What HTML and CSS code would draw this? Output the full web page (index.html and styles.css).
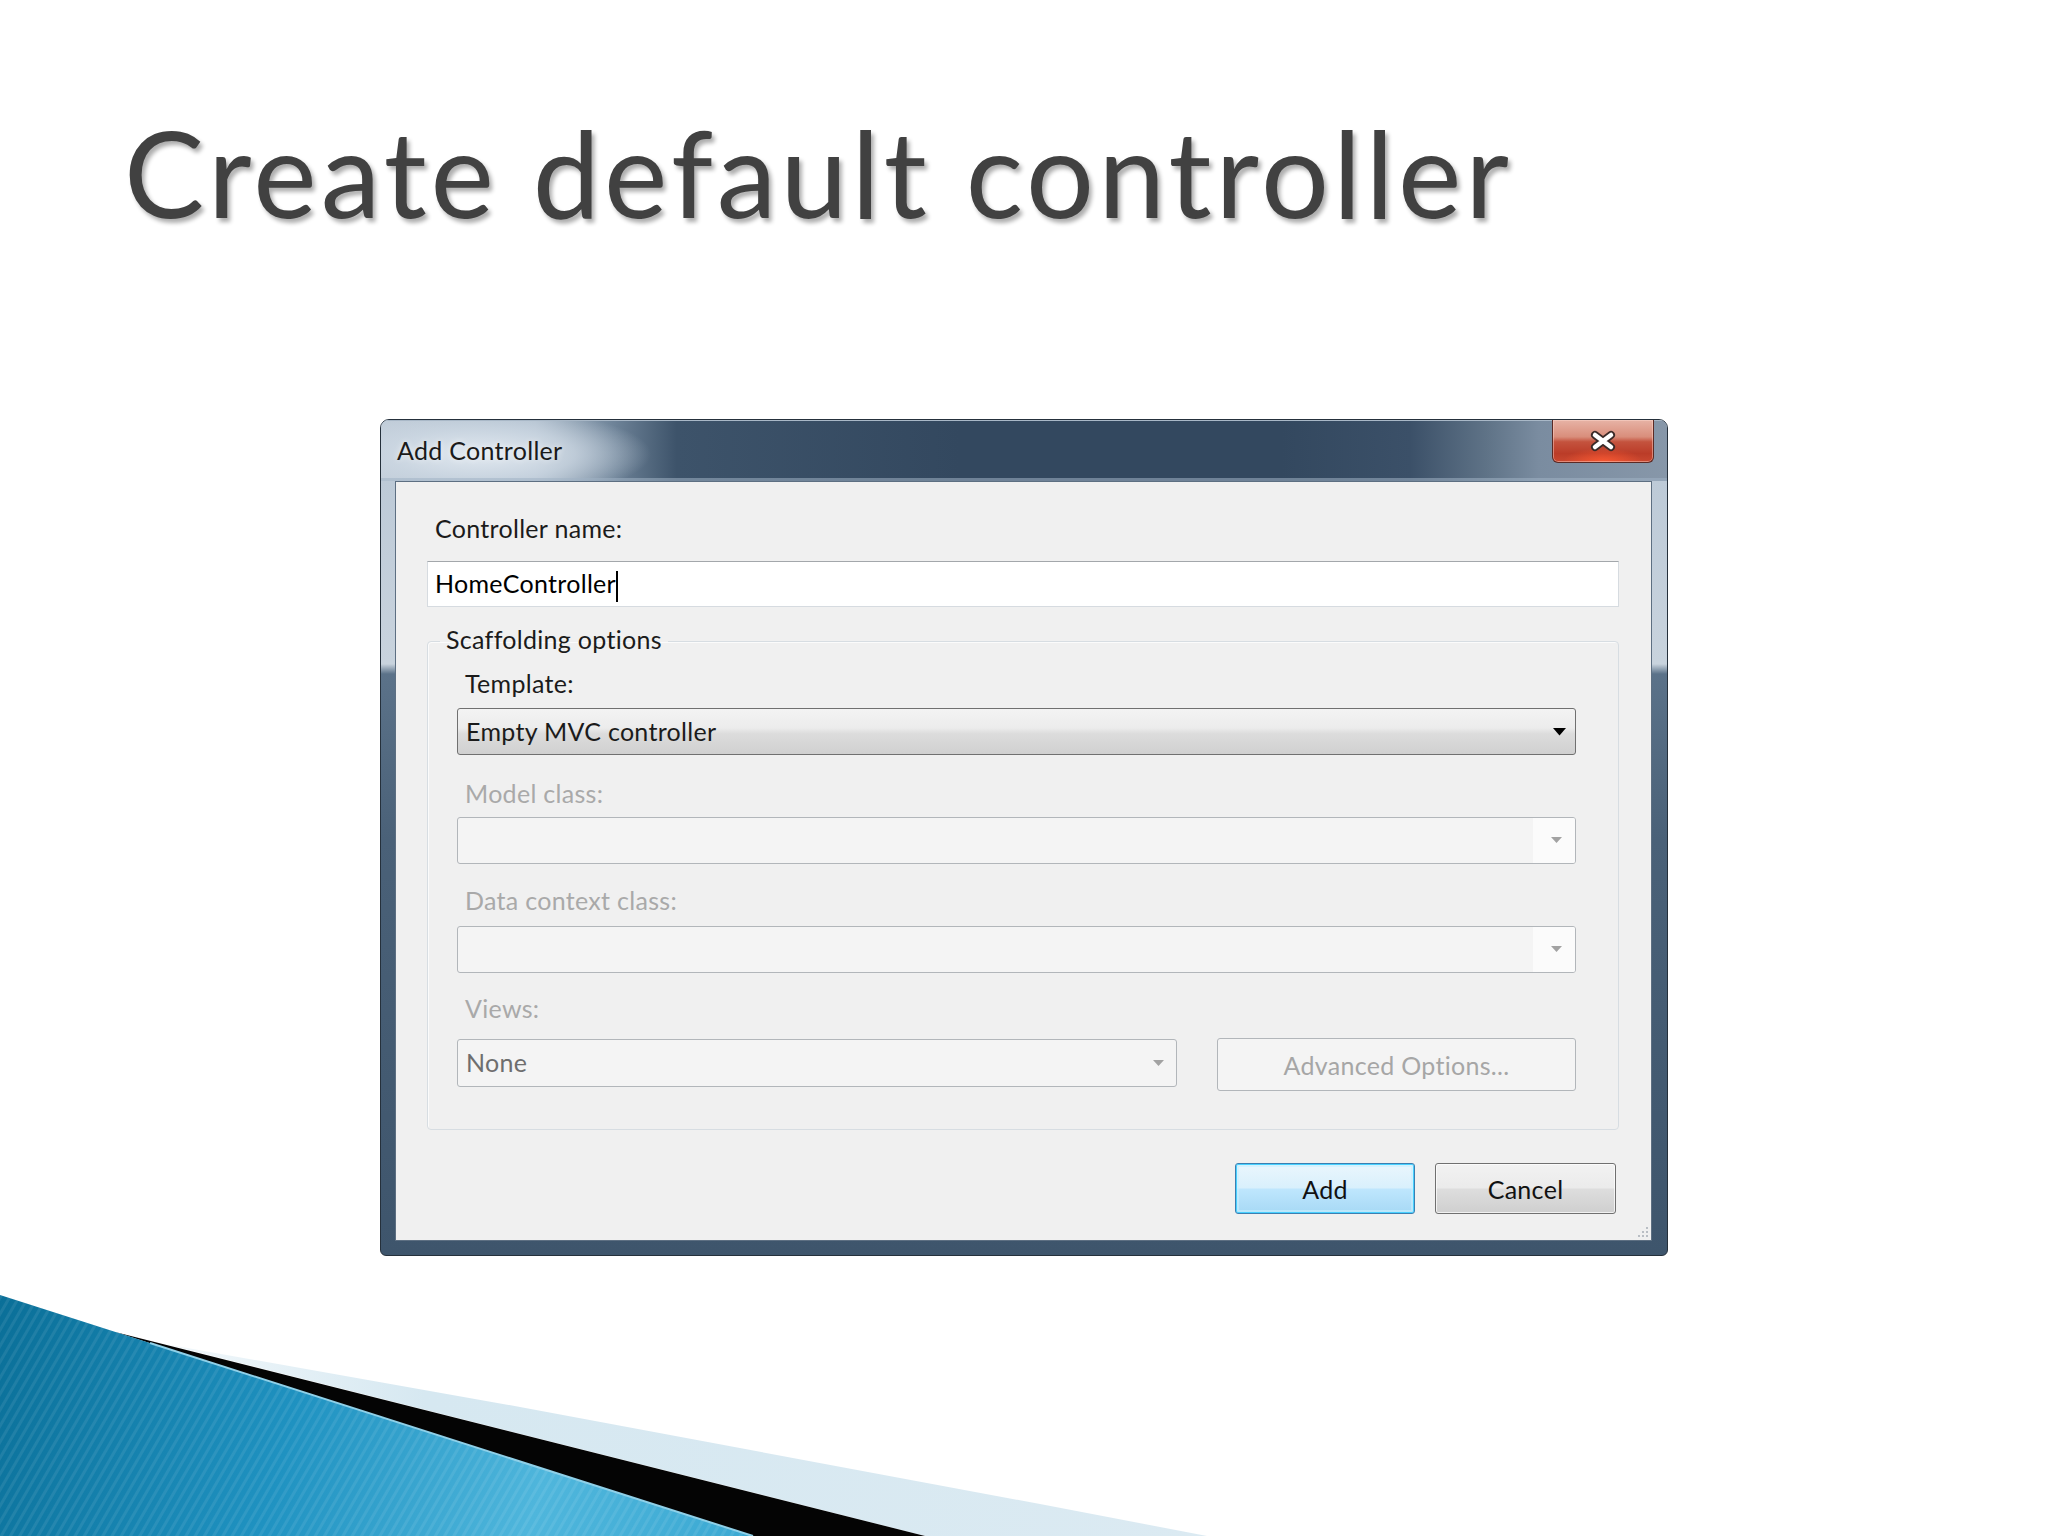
FILE: index.html
```html
<!DOCTYPE html>
<html lang="en">
<head>
<meta charset="utf-8">
<title>Create default controller</title>
<link rel="stylesheet" href="styles.css">
</head>
<body>
<div class="slide">
  <h1 class="slide-title">Create default controller</h1>

  <div class="dialog">
    <div class="titlebar">
      <span class="titlebar-text">Add Controller</span>
      <div class="close-btn">
        <svg class="close-x" width="30" height="22" viewBox="0 0 30 22">
          <path d="M7 5 L23 17 M23 5 L7 17" stroke="#3b2a28" stroke-width="8" stroke-linecap="round"/>
          <path d="M7 5 L23 17 M23 5 L7 17" stroke="#ffffff" stroke-width="4.5" stroke-linecap="round"/>
        </svg>
      </div>
    </div>
    <div class="frame-body">
      <div class="client">
        <div class="label">Controller name:</div>
        <div class="textbox"><span>HomeController</span><span class="caret"></span></div>

        <fieldset class="group">
          <legend>Scaffolding options</legend>
          <div class="group-body">
            <div class="label">Template:</div>
            <div class="combo combo-active gap-combo-template">
              <span class="combo-text">Empty MVC controller</span>
              <span class="combo-btn"><svg width="13" height="8" viewBox="0 0 13 8"><path d="M0 0 H13 L6.5 7.5 Z" fill="#000"/></svg></span>
            </div>

            <div class="label disabled gap-model">Model class:</div>
            <div class="combo combo-disabled gap-combo-model">
              <span class="combo-text"></span>
              <span class="combo-btn"><svg width="11" height="7" viewBox="0 0 11 7"><path d="M0 0 H11 L5.5 6 Z" fill="#a2a2a2"/></svg></span>
            </div>

            <div class="label disabled gap-data">Data context class:</div>
            <div class="combo combo-disabled gap-combo-data">
              <span class="combo-text"></span>
              <span class="combo-btn"><svg width="11" height="7" viewBox="0 0 11 7"><path d="M0 0 H11 L5.5 6 Z" fill="#a2a2a2"/></svg></span>
            </div>

            <div class="label disabled gap-views">Views:</div>
            <div class="views-row">
              <div class="combo combo-disabled combo-views">
                <span class="combo-text muted">None</span>
                <span class="combo-btn"><svg width="11" height="7" viewBox="0 0 11 7"><path d="M0 0 H11 L5.5 6 Z" fill="#a2a2a2"/></svg></span>
              </div>
              <div class="btn-advanced">Advanced Options...</div>
            </div>
          </div>
        </fieldset>

        <div class="actions">
          <div class="btn btn-default">Add</div>
          <div class="btn">Cancel</div>
        </div>

        <svg class="grip" width="12" height="12" viewBox="0 0 12 12">
          <rect x="9" y="1" width="2" height="2" fill="#b9bec4"/>
          <rect x="9" y="5" width="2" height="2" fill="#b9bec4"/>
          <rect x="9" y="9" width="2" height="2" fill="#b9bec4"/>
          <rect x="5" y="5" width="2" height="2" fill="#b9bec4"/>
          <rect x="5" y="9" width="2" height="2" fill="#b9bec4"/>
          <rect x="1" y="9" width="2" height="2" fill="#b9bec4"/>
        </svg>
      </div>
    </div>
  </div>

  <svg class="swoosh" width="2048" height="241" viewBox="0 0 2048 241">
    <defs>
      <linearGradient id="blueGrad" x1="0" y1="0" x2="760" y2="241" gradientUnits="userSpaceOnUse">
        <stop offset="0" stop-color="#0a6f98"/>
        <stop offset="0.4" stop-color="#1f92c1"/>
        <stop offset="0.72" stop-color="#4fb6dc"/>
        <stop offset="1" stop-color="#3aa8d2"/>
      </linearGradient>
      <linearGradient id="paleGrad" x1="165" y1="0" x2="1207" y2="0" gradientUnits="userSpaceOnUse">
        <stop offset="0" stop-color="#f2f8fb"/>
        <stop offset="0.25" stop-color="#d6e8f1"/>
        <stop offset="1" stop-color="#dbeaf2"/>
      </linearGradient>
      <pattern id="stripes" width="8" height="8" patternUnits="userSpaceOnUse" patternTransform="rotate(30)">
        <rect width="3" height="8" fill="#ffffff" opacity="0.08"/>
      </pattern>
    </defs>
    <path d="M165 49 L520 112 L1040 209 L1207 241 L925 241 Z" fill="url(#paleGrad)"/>
    <path d="M115 37 L925 241 L753 241 Z" fill="#040404"/>
    <path d="M0 0 L753 241 L0 241 Z" fill="url(#blueGrad)"/>
    <path d="M0 0 L753 241 L0 241 Z" fill="url(#stripes)"/>
    <path d="M150 48 L753 241" stroke="#8fd0e8" stroke-width="2"/>
  </svg>
</div>
</body>
</html>
```

FILE: styles.css
```css
* {
  box-sizing: border-box;
}

html, body {
  margin: 0;
  padding: 0;
  background: #ffffff;
}

.slide {
  width: 2048px;
  height: 1536px;
  display: flex;
  flex-direction: column;
  overflow: hidden;
  background: #ffffff;
  font-family: Lato, "Open Sans", sans-serif;
}

.slide-title {
  margin: 112px 0 0 124px;
  font-family: Lato, "Open Sans", sans-serif;
  font-weight: 400;
  font-size: 120px;
  line-height: 120px;
  letter-spacing: 4.1px;
  color: #414141;
  text-shadow: 3px 4px 4px rgba(0, 0, 0, 0.32);
  white-space: nowrap;
}

/* ---------- dialog window ---------- */
.dialog {
  width: 1288px;
  margin: 187px auto 0;
  border: 1px solid #25303b;
  border-radius: 9px 9px 6px 6px;
  background: linear-gradient(to bottom,
      #b9c7d5 0px, #c6d1dc 200px, #c8d3dd 244px,
      #5b7289 254px, #4a6178 420px, #3e556c 100%);
  overflow: hidden;
  letter-spacing: 0.3px;
}

.titlebar {
  height: 61px;
  display: flex;
  justify-content: space-between;
  align-items: flex-start;
  padding: 0 13px 0 16px;
  background:
    radial-gradient(ellipse 170px 46px at 100px 34px,
      rgba(228, 235, 242, 0.95) 0%, rgba(206, 217, 228, 0.75) 55%, rgba(206, 217, 228, 0) 100%),
    linear-gradient(to right,
      #bfcbd7 0%, #aebdcc 12%, #6f8499 18%, #3d536a 23%,
      #33485f 45%, #33485f 70%, #3b5068 80%, #5f7387 86%, #7a8ca0 90%, #8797a9 100%);
  box-shadow: inset 0 1px 0 #a9b8c7, inset 0 -3px 0 rgba(160, 178, 196, 0.55);
}

.titlebar-text {
  margin-top: 15px;
  font-size: 25px;
  line-height: 30px;
  color: #1a1a1a;
  text-shadow: 0 0 6px rgba(255, 255, 255, 0.7);
}

.close-btn {
  width: 102px;
  height: 43px;
  display: flex;
  align-items: center;
  justify-content: center;
  border: 1px solid #5c2a24;
  border-top: none;
  border-radius: 0 0 6px 6px;
  background:
    radial-gradient(ellipse 40px 14px at 50% 100%, rgba(255, 90, 50, 0.85), rgba(255, 90, 50, 0)),
    linear-gradient(to bottom, #e7b3a6 0%, #d98e7c 40%, #c4533e 52%, #bb3c28 80%, #c94830 100%);
  box-shadow: inset 0 0 0 1px rgba(255, 220, 210, 0.45);
}

.close-x {
  display: block;
}

.frame-body {
  padding: 0 15px 14px 14px;
}

/* ---------- client area ---------- */
.client {
  position: relative;
  background: #f0f0f0;
  border: 1px solid #5d6f82;
  padding: 31px 32px 26px 31px;
  font-size: 25px;
  color: #1b1b1b;
}

.label {
  height: 30px;
  margin-left: 8px;
  font-size: 25px;
  line-height: 30px;
  white-space: nowrap;
}

.label.disabled {
  color: #a9a9a9;
}

.textbox {
  height: 46px;
  margin-top: 18px;
  background: #ffffff;
  border: 1px solid #d6dbe0;
  border-top-color: #a3a7ab;
  padding: 1px 8px 0 7px;
  line-height: 40px;
  color: #000000;
  white-space: nowrap;
}

.caret {
  display: inline-block;
  width: 2px;
  height: 31px;
  margin-left: 0;
  vertical-align: middle;
  background: #000000;
}

/* ---------- group box ---------- */
.group {
  margin: 17px 0 0 0;
  padding: 9px 42px 38px 12px;
  min-width: 0;
  border: 1px solid #d7dde2;
  border-radius: 4px;
  box-shadow: inset 1px 1px 0 #fbfbfb;
}

.group legend {
  padding: 0 6px 5px;
  font-size: 25px;
  line-height: 30px;
  color: #1b1b1b;
}

.group-body {
  padding-left: 17px;
}

/* ---------- combo boxes ---------- */
.combo {
  display: flex;
  align-items: stretch;
  height: 47px;
  border: 1px solid #707070;
  border-radius: 3px;
  overflow: hidden;
}

.combo-text {
  flex: 1;
  padding-left: 8px;
  line-height: 45px;
  white-space: nowrap;
}

.combo-text.muted {
  color: #6e6e6e;
}

.combo-btn {
  width: 32px;
  display: flex;
  align-items: center;
  justify-content: center;
}

.combo-active {
  background: linear-gradient(to bottom, #f3f3f3 0%, #ececec 42%, #dcdcdc 55%, #d0d0d0 100%);
}

.combo-disabled {
  background: #f4f4f4;
  border-color: #b2b6ba;
}

.combo-disabled .combo-btn {
  width: 42px;
  padding-left: 5px;
  background: #fbfbfb;
}

.combo-views {
  width: 720px;
  height: 48px;
  margin-top: 1px;
}

.combo-views .combo-btn {
  width: 36px;
  padding-left: 0;
  background: transparent;
}

.gap-combo-template { margin-top: 10px; }
.gap-model { margin-top: 23px; }
.gap-combo-model { margin-top: 9px; }
.gap-data { margin-top: 21px; }
.gap-combo-data { margin-top: 11px; }
.gap-views { margin-top: 20px; }

.views-row {
  display: flex;
  align-items: flex-start;
  gap: 40px;
  margin-top: 15px;
}

.btn-advanced {
  flex: 1;
  height: 53px;
  display: flex;
  align-items: center;
  justify-content: center;
  border: 1px solid #b2b6ba;
  border-radius: 3px;
  background: #f4f4f4;
  color: #a6a6a6;
  white-space: nowrap;
}

/* ---------- buttons ---------- */
.actions {
  display: flex;
  justify-content: flex-end;
  gap: 20px;
  margin-top: 33px;
  padding-right: 3px;
}

.btn {
  width: 181px;
  height: 51px;
  display: flex;
  align-items: center;
  justify-content: center;
  border: 1px solid #707070;
  border-radius: 3px;
  background: linear-gradient(to bottom, #f2f2f2 0%, #ebebeb 48%, #dddddd 52%, #cfcfcf 100%);
  box-shadow: inset 0 0 0 1px rgba(255, 255, 255, 0.7);
  color: #111111;
}

.btn-default {
  width: 180px;
  border-color: #3c7fb1;
  background: linear-gradient(to bottom, #eaf6fd 0%, #d9f0fc 48%, #bee6fd 52%, #a7d9f5 100%);
  box-shadow: inset 0 0 0 1px #48d0ff, inset 0 0 0 3px rgba(200, 240, 255, 0.6);
}

.grip {
  position: absolute;
  right: 2px;
  bottom: 2px;
}

/* ---------- decorative swoosh ---------- */
.swoosh {
  display: block;
  margin-top: auto;
  flex-shrink: 0;
}
```
